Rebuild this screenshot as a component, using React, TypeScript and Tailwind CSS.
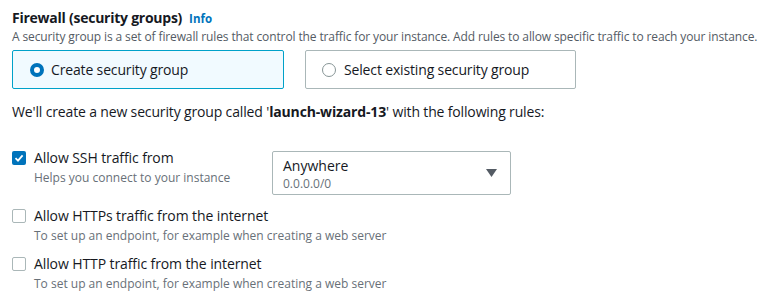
import React from 'react';

const font = { fontFamily: '"Open Sans", "Noto Sans", Arial, sans-serif' };

const Checkbox = ({ checked }: { checked?: boolean }) => (
    checked ? (
        <span className="flex items-center justify-center w-[14px] h-[14px] rounded-[2px] bg-[#0073bb] shrink-0">
            <svg width="10" height="10" viewBox="0 0 10 10">
                <path d="M1.5 5.2 L4 7.6 L8.6 2.4" stroke="white" strokeWidth="1.8" fill="none" />
            </svg>
        </span>
    ) : (
        <span className="block w-[14px] h-[14px] rounded-[2px] border border-[#aab7b8] bg-white shrink-0" />
    )
);

const Rule = ({ checked, title, sub }: { checked?: boolean; title: string; sub: string }) => (
    <div className="flex">
        <div className="pt-[2px]">
            <Checkbox checked={checked} />
        </div>
        <div className="ml-[8px]">
            <div className="text-[14px] leading-[18px] text-[#16191f] tracking-[-0.1px]">{title}</div>
            <div className="text-[12px] leading-[16px] text-[#687078] mt-[3px]">{sub}</div>
        </div>
    </div>
);

export default function App() {
    return (
        <div className="w-[773px] h-[301px] bg-white pl-[12px] pt-[8px] overflow-hidden" style={font}>
            <div className="flex items-baseline">
                <h2 className="text-[14px] font-bold leading-[20px] text-[#16191f] tracking-[-0.25px]">Firewall (security groups)</h2>
                <a className="ml-[7px] text-[11.5px] font-bold text-[#0073bb]">Info</a>
            </div>
            <p className="text-[12px] leading-[16px] text-[#545b64] mt-[1px] tracking-[-0.12px] whitespace-nowrap">
                A security group is a set of firewall rules that control the traffic for your instance. Add rules to allow specific traffic to reach your instance.
            </p>
            <div className="flex gap-[21px] mt-[5px]">
                <div className="flex items-center w-[272px] h-[39px] bg-[#f1faff] border border-[#00a1c9] rounded-[2px] pl-[17px]">
                    <span className="w-[14px] h-[14px] rounded-full border-[4px] border-[#0073bb] bg-white" />
                    <span className="ml-[7px] text-[14px] text-[#16191f] tracking-[-0.15px]">Create security group</span>
                </div>
                <div className="flex items-center w-[271px] h-[39px] bg-white border border-[#aab7b8] rounded-[2px] pl-[16px]">
                    <span className="w-[14px] h-[14px] rounded-full border border-[#879596] bg-white" />
                    <span className="ml-[8px] text-[14px] text-[#16191f] tracking-[-0.15px]">Select existing security group</span>
                </div>
            </div>
            <p className="text-[14px] leading-[18px] text-[#16191f] mt-[14px] tracking-[-0.15px]">
                We'll create a new security group called '<span className="font-bold">launch-wizard-13</span>' with the following rules:
            </p>
            <div className="flex mt-[28px]">
                <div className="w-[260px]">
                    <Rule checked title="Allow SSH traffic from" sub="Helps you connect to your instance" />
                </div>
                <div className="flex items-center justify-between w-[239px] h-[44px] border border-[#aab7b8] rounded-[2px] pl-[10px] pr-[13px] mt-[2px]">
                    <div className="self-start pt-[5px]">
                        <div className="text-[14px] leading-[18px] text-[#16191f]">Anywhere</div>
                        <div className="text-[12px] leading-[16px] text-[#687078] mt-[1px]">0.0.0.0/0</div>
                    </div>
                    <svg width="11" height="8" viewBox="0 0 11 8">
                        <path d="M0 0 H11 L5.5 8 Z" fill="#545b64" />
                    </svg>
                </div>
            </div>
            <div className="mt-[12px]">
                <Rule title="Allow HTTPs traffic from the internet" sub="To set up an endpoint, for example when creating a web server" />
            </div>
            <div className="mt-[11px]">
                <Rule title="Allow HTTP traffic from the internet" sub="To set up an endpoint, for example when creating a web server" />
            </div>
        </div>
    );
}
